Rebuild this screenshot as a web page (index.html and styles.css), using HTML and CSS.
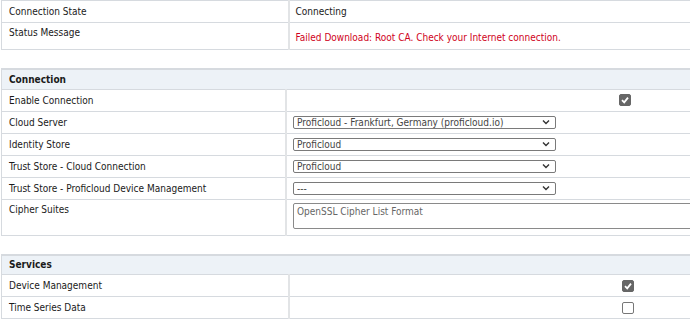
FILE: index.html
```html
<!DOCTYPE html>
<html lang="en">
<head>
    <meta charset="UTF-8">
    <title>Cloud Connection</title>
    <link rel="stylesheet" href="styles.css">
</head>
<body>

    <table class="settings">
        <tr>
            <td class="label">Connection State</td>
            <td class="value">Connecting</td>
        </tr>
        <tr class="tall">
            <td class="label top">Status Message</td>
            <td class="value error">Failed Download: Root CA. Check your Internet connection.</td>
        </tr>
    </table>

    <table class="settings">
        <tr class="section">
            <th colspan="2">Connection</th>
        </tr>
        <tr>
            <td class="label">Enable Connection</td>
            <td class="value"><span class="check checked"></span></td>
        </tr>
        <tr>
            <td class="label">Cloud Server</td>
            <td class="value">
                <select class="select">
                    <option>Proficloud - Frankfurt, Germany (proficloud.io)</option>
                </select>
            </td>
        </tr>
        <tr>
            <td class="label">Identity Store</td>
            <td class="value">
                <select class="select">
                    <option>Proficloud</option>
                </select>
            </td>
        </tr>
        <tr>
            <td class="label">Trust Store - Cloud Connection</td>
            <td class="value">
                <select class="select">
                    <option>Proficloud</option>
                </select>
            </td>
        </tr>
        <tr>
            <td class="label">Trust Store - Proficloud Device Management</td>
            <td class="value">
                <select class="select">
                    <option>---</option>
                </select>
            </td>
        </tr>
        <tr class="cipher">
            <td class="label top">Cipher Suites</td>
            <td class="value top"><textarea class="cipher-box" placeholder="OpenSSL Cipher List Format"></textarea></td>
        </tr>
    </table>

    <table class="settings">
        <tr class="section">
            <th colspan="2">Services</th>
        </tr>
        <tr>
            <td class="label">Device Management</td>
            <td class="value"><span class="check checked"></span></td>
        </tr>
        <tr>
            <td class="label">Time Series Data</td>
            <td class="value"><span class="check"></span></td>
        </tr>
    </table>

</body>
</html>
```

FILE: styles.css
```css
html, body {
    overflow: hidden;
}
body {
    margin: 0;
    padding: 0 0 0 1px;
    font-family: "DejaVu Sans Condensed", "DejaVu Sans", sans-serif;
    font-size: 10px;
    color: #1a1a1a;
    background-color: #fff;
}
.settings {
    width: 720px;
    border-collapse: collapse;
    margin-bottom: 18px;
}
.settings td,
.settings th {
    box-sizing: border-box;
    border: 1px solid #d6dadf;
    padding: 0 7px;
    height: 22px;
    text-align: left;
    vertical-align: middle;
}
.settings .label {
    width: 287px;
}
.settings .value {
    border-left: 2px solid #e2e4e6;
    padding-left: 6px;
}
.settings .top {
    vertical-align: top;
    padding-top: 4px;
}
.settings tr.tall td {
    height: 27px;
}
.settings .error {
    color: #d0021b;
    padding-top: 2px;
}
.settings tr.section th {
    background-color: #edf2f7;
    border-top: 2px solid #d6dadf;
    font-weight: bold;
    height: 20px;
}
.settings tr.cipher td {
    height: 36px;
}
.settings tr.cipher td.value {
    padding-top: 3px;
}
.check {
    display: block;
    width: 10px;
    height: 10px;
    margin-left: 326px;
    border: 1px solid #777;
    border-radius: 2px;
    background: #fff;
}
.check.checked {
    border-color: #666;
    background: #666 url("data:image/svg+xml,%3Csvg xmlns='http://www.w3.org/2000/svg' viewBox='0 0 10 10'%3E%3Cpath d='M2 5.2 L4.2 7.4 L8 2.6' fill='none' stroke='white' stroke-width='1.8'/%3E%3C/svg%3E") center / 10px 10px no-repeat;
}
.select {
    display: block;
    width: 263px;
    height: 13px;
    padding: 0 0 0 3px;
    border: 1px solid #7a7a7a;
    border-radius: 2px;
    font-family: inherit;
    font-size: 10px;
    line-height: 11px;
    color: #444;
    background: #fff url("data:image/svg+xml,%3Csvg xmlns='http://www.w3.org/2000/svg' viewBox='0 0 8 6'%3E%3Cpath d='M1 1.5 L4 4.5 L7 1.5' fill='none' stroke='%23333' stroke-width='1.4'/%3E%3C/svg%3E") right 5px center / 8px 6px no-repeat;
    appearance: none;
    -webkit-appearance: none;
}
.cipher-box {
    display: block;
    width: 420px;
    height: 26px;
    padding: 2px 3px;
    box-sizing: border-box;
    border: 1px solid #8a8a8a;
    border-radius: 2px;
    font-family: inherit;
    font-size: 10px;
    resize: none;
}
.cipher-box::placeholder {
    color: #666;
}
```
